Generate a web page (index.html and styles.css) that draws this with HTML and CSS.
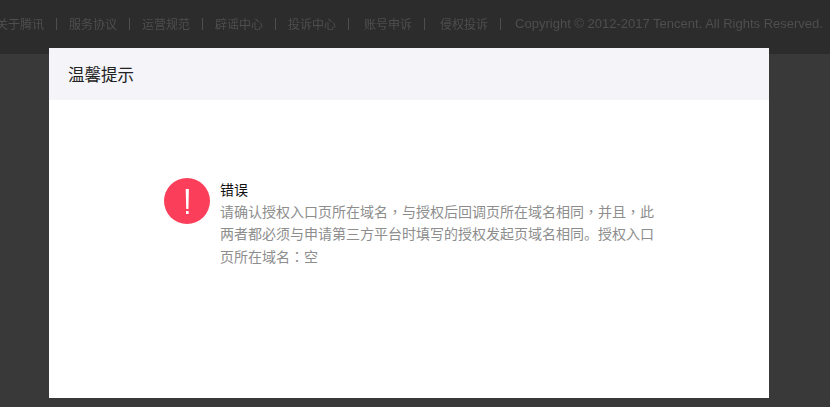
FILE: index.html
```html
<!DOCTYPE html>
<html lang="zh-CN">
<head>
<meta charset="utf-8">
<title>温馨提示</title>
<link rel="stylesheet" href="styles.css">
</head>
<body>
<footer class="page-footer">
  <nav class="links">
    <span class="link first">关于腾讯</span>
    <span class="link">服务协议</span>
    <span class="link">运营规范</span>
    <span class="link">辟谣中心</span>
    <span class="link wide">投诉中心</span>
    <span class="link wide">账号申诉</span>
    <span class="link last">侵权投诉</span>
    <span class="link copy">Copyright © 2012-2017 Tencent. All Rights Reserved.</span>
  </nav>
</footer>
<section class="dialog">
  <header class="dialog-head">温馨提示</header>
  <div class="dialog-body">
    <div class="message">
      <svg class="alert" viewBox="0 0 46 46" aria-hidden="true">
        <circle cx="23" cy="23" r="23" fill="#fb3f5b"/>
        <path d="M21.7 11h3.2l-.5 20h-2.2z" fill="#fff"/>
        <rect x="22" y="33" width="2.6" height="3" fill="#fff"/>
      </svg>
      <div class="text">
        <h2 class="title">错误</h2>
        <p class="desc">请确认授权入口页所在域名<span class="punct" lang="zh-TW">，</span>与授权后回调页所在域名相同<span class="punct" lang="zh-TW">，</span>并且<span class="punct" lang="zh-TW">，</span>此两者都必须与申请第三方平台时填写的授权发起页域名相同。授权入口页所在域名<span class="punct" lang="zh-TW">：</span>空</p>
      </div>
    </div>
  </div>
</section>
</body>
</html>
```
FILE: styles.css
```css
* { box-sizing: border-box; }
html, body { height: 100%; }
body {
  margin: 0;
  background: #393939;
  font-family: "Noto Sans CJK SC", "Liberation Sans", sans-serif;
  overflow: hidden;
}
.page-footer {
  height: 54px;
  background: #2c2c2c;
  overflow: hidden;
}
.links {
  display: flex;
  margin-left: -4px;
  padding-top: 15px;
  white-space: nowrap;
  font-size: 12px;
  color: #4e4e4e;
  filter: blur(0.5px);
}
.link { padding-right: 12px; margin-right: 12px; border-right: 1px solid #4e4e4e; height: 12px; line-height: 12px; margin-top: 3px; }
.link.wide { margin-right: 15px; }
.link.last { margin-right: 14px; }
.copy { border-right: 0; font-family: "Liberation Sans", sans-serif; font-size: 13px; }
.dialog {
  position: absolute;
  left: 49px;
  top: 48px;
  width: 720px;
  height: 350px;
  background: #fff;
  display: flex;
  flex-direction: column;
}
.dialog-head {
  height: 52px;
  padding-left: 19px;
  line-height: 53px;
  background: #f4f4f9;
  font-size: 16.5px;
  color: #222;
}
.dialog-body { flex: 1; padding: 78px 115px 0; }
.message { display: flex; gap: 10px; }
.alert { width: 46px; height: 46px; flex: none; }
.text { width: 436px; }
.title { margin: 0; font-size: 14px; font-weight: 400; line-height: 22px; color: #111; }
.desc { margin: 0; font-size: 14px; line-height: 22.4px; color: #8d8d8d; }
.punct { font-family: "Noto Sans CJK TC", sans-serif; }
```
